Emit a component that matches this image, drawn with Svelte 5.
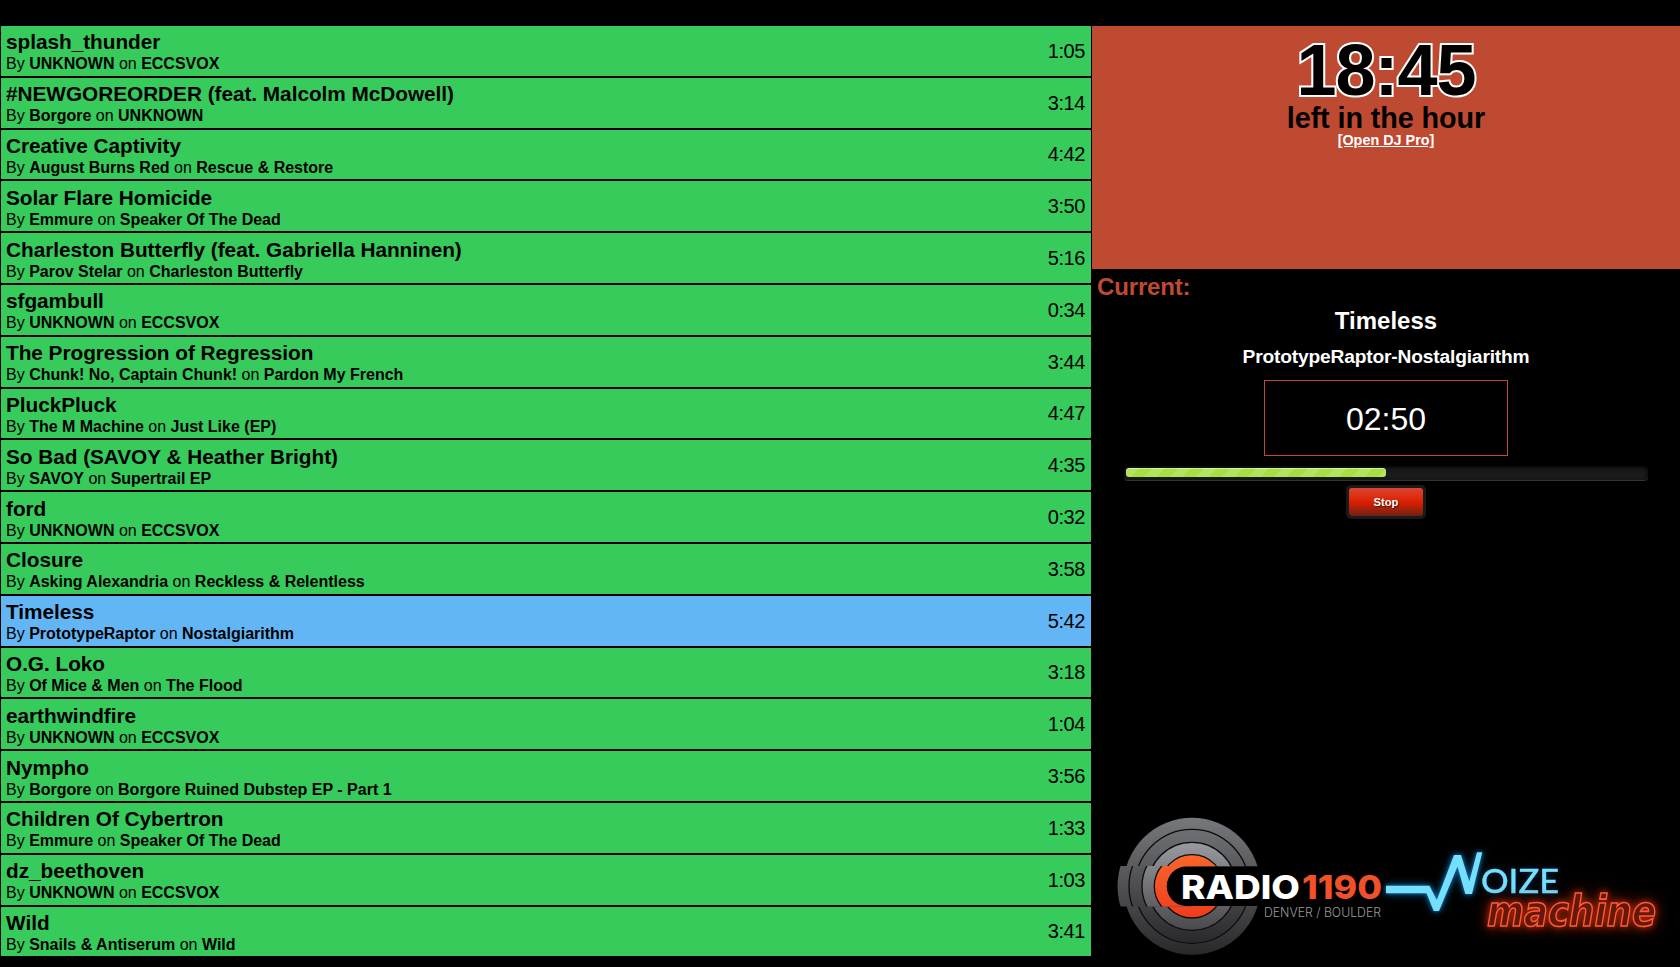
<script>
  const tracks = [
    ['splash_thunder', 'UNKNOWN', 'ECCSVOX', '1:05'],
    ['#NEWGOREORDER (feat. Malcolm McDowell)', 'Borgore', 'UNKNOWN', '3:14'],
    ['Creative Captivity', 'August Burns Red', 'Rescue & Restore', '4:42'],
    ['Solar Flare Homicide', 'Emmure', 'Speaker Of The Dead', '3:50'],
    ['Charleston Butterfly (feat. Gabriella Hanninen)', 'Parov Stelar', 'Charleston Butterfly', '5:16'],
    ['sfgambull', 'UNKNOWN', 'ECCSVOX', '0:34'],
    ['The Progression of Regression', 'Chunk! No, Captain Chunk!', 'Pardon My French', '3:44'],
    ['PluckPluck', 'The M Machine', 'Just Like (EP)', '4:47'],
    ['So Bad (SAVOY & Heather Bright)', 'SAVOY', 'Supertrail EP', '4:35'],
    ['ford', 'UNKNOWN', 'ECCSVOX', '0:32'],
    ['Closure', 'Asking Alexandria', 'Reckless & Relentless', '3:58'],
    ['Timeless', 'PrototypeRaptor', 'Nostalgiarithm', '5:42'],
    ['O.G. Loko', 'Of Mice & Men', 'The Flood', '3:18'],
    ['earthwindfire', 'UNKNOWN', 'ECCSVOX', '1:04'],
    ['Nympho', 'Borgore', 'Borgore Ruined Dubstep EP - Part 1', '3:56'],
    ['Children Of Cybertron', 'Emmure', 'Speaker Of The Dead', '1:33'],
    ['dz_beethoven', 'UNKNOWN', 'ECCSVOX', '1:03'],
    ['Wild', 'Snails & Antiserum', 'Wild', '3:41']
  ];
  const current = 11;
  const progress = 50;
</script>

<div class="page">
  <main class="playlist">
    {#each tracks as [title, artist, album, time], i}
      <div class="track" class:playing={i === current}>
        <div class="info">
          <div class="title">{title}</div>
          <div class="by">By <b>{artist}</b> on <b>{album}</b></div>
        </div>
        <div class="time">{time}</div>
      </div>
    {/each}
  </main>

  <aside class="side">
    <section class="hour">
      <div class="clock">18:45</div>
      <div class="left">left in the hour</div>
      <a href="#pro">[Open DJ Pro]</a>
    </section>

    <section class="now">
      <h2>Current:</h2>
      <div class="song">Timeless</div>
      <div class="artist">PrototypeRaptor-Nostalgiarithm</div>
      <div class="remaining">02:50</div>
      <div class="bar"><div class="fill" style="width: {progress}%"></div></div>
      <button>Stop</button>
    </section>

    <svg class="logos" viewBox="1092 800 588 167" width="588" height="167">
      <defs>
        <linearGradient id="g1" gradientUnits="userSpaceOnUse" x1="0" y1="818" x2="0" y2="955">
          <stop offset="0" stop-color="#77787c" /><stop offset="1" stop-color="#29292b" />
        </linearGradient>
        <linearGradient id="g2" gradientUnits="userSpaceOnUse" x1="0" y1="829" x2="0" y2="943">
          <stop offset="0" stop-color="#707175" /><stop offset="1" stop-color="#29292b" />
        </linearGradient>
        <linearGradient id="g3" gradientUnits="userSpaceOnUse" x1="0" y1="842" x2="0" y2="930">
          <stop offset="0" stop-color="#9a9ba1" /><stop offset="1" stop-color="#4a4a4d" />
        </linearGradient>
        <linearGradient id="g4" gradientUnits="userSpaceOnUse" x1="0" y1="855" x2="0" y2="918">
          <stop offset="0" stop-color="#f8672b" /><stop offset="1" stop-color="#f03b1c" />
        </linearGradient>
        <clipPath id="outer"><path d="M1092 800h300v66.5h-300zM1092 906h300v61h-300z" /></clipPath>
        <!-- the band is clipped before the six-pixel shift, so its right edge sits at the disc's centre -->
        <clipPath id="band"><rect x="1092" y="866" width="100" height="40.5" /></clipPath>
        <g id="rings" stroke="#0c0c0d" stroke-width="1.3">
          <circle cx="1192" cy="886.3" r="68.5" fill="url(#g1)" stroke="none" />
          <circle cx="1192" cy="886.3" r="57" fill="url(#g2)" />
          <circle cx="1192" cy="886.3" r="44" fill="url(#g3)" />
          <circle cx="1192" cy="886.3" r="31.7" fill="url(#g4)" />
        </g>
        <filter id="glow" x="-20%" y="-50%" width="140%" height="200%">
          <feGaussianBlur stdDeviation="5" />
        </filter>
        <filter id="halo" x="-20%" y="-50%" width="140%" height="200%">
          <feGaussianBlur stdDeviation="2" />
        </filter>
        <path id="pulse" d="M1386 885.7H1429.5L1436.8 900L1454 855H1461L1469.3 881.5L1477 852.3H1482.3L1472 894H1465.3L1457.5 866.5L1439 911H1433.7L1426.5 893.3H1386Z" />
      </defs>

      <use href="#rings" clip-path="url(#outer)" />
      <g clip-path="url(#band)"><use href="#rings" x="-6" /></g>
      <rect x="1166.7" y="866.5" width="130" height="39.5" rx="19.7" fill="#000" />
      <g class="radio">
        <text x="1181" y="898.5" fill="#fff" textLength="119" lengthAdjust="spacingAndGlyphs">RADIO</text>
        <text x="1302" y="898.5" fill="#f0512a" textLength="80" lengthAdjust="spacingAndGlyphs">1190</text>
      </g>
      <text class="city" x="1264" y="916.7" textLength="117" lengthAdjust="spacingAndGlyphs">DENVER / BOULDER</text>

      <use href="#pulse" fill="#1686d8" opacity=".6" filter="url(#glow)" />
      <use href="#pulse" fill="#1c78b8" filter="url(#halo)" />
      <use href="#pulse" fill="#73e0ff" />
      <text class="noize" x="1481" y="892.7" textLength="78" lengthAdjust="spacingAndGlyphs">OIZE</text>

      <text class="machine" x="1487" y="925.5" textLength="169" lengthAdjust="spacingAndGlyphs">machine</text>
    </svg>
  </aside>
</div>

<style>
  :global(body) {
    background: #000;
  }
  .page {
    box-sizing: border-box;
    width: 1680px;
    height: 967px;
    padding-top: 25px;
    display: flex;
    overflow: hidden;
    background: #000;
    color: #000;
    font-family: 'Liberation Sans', Arial, sans-serif;
  }
  .playlist {
    width: 1092px;
    height: 932.4px;
    display: flex;
    flex-direction: column;
  }
  .track {
    box-sizing: border-box;
    flex: 1 1 0;
    min-height: 0;
    display: flex;
    justify-content: space-between;
    align-items: center;
    border: 1px solid #000;
    padding: 0 6px 0 5px;
    background: #36cb5b;
  }
  .playing {
    background: #62b6f5;
  }
  .info {
    padding-top: 1px;
  }
  .title {
    font-size: 20.8px;
    font-weight: bold;
    line-height: 24px;
    letter-spacing: -0.04px;
    white-space: nowrap;
  }
  .by {
    padding-top: 1px;
    margin-bottom: -1px;
    font-size: 16px;
    line-height: 18px;
    white-space: nowrap;
  }
  .time {
    font-size: 20px;
    line-height: 24px;
    letter-spacing: -0.4px;
  }
  .side {
    width: 588px;
    display: flex;
    flex-direction: column;
  }
  .hour {
    box-sizing: border-box;
    height: 243px;
    margin-top: 1px;
    padding-top: 4px;
    display: flex;
    flex-direction: column;
    align-items: center;
    background: #bf4a32;
    font-weight: bold;
  }
  .clock {
    font-size: 72px;
    line-height: 80px;
    letter-spacing: -1px;
    -webkit-text-stroke: 4px #fff;
    paint-order: stroke fill;
  }
  .left {
    margin-top: -4px;
    font-size: 28.8px;
    line-height: 24px;
    letter-spacing: -0.1px;
  }
  .hour a {
    color: #fff;
    font-size: 14.4px;
    line-height: 17px;
    margin-top: 2px;
  }
  .now {
    flex: 1;
    display: flex;
    flex-direction: column;
    align-items: center;
    color: #fff;
  }
  h2 {
    align-self: flex-start;
    margin: 4px 0 0 5px;
    font-size: 24px;
    line-height: 28px;
    letter-spacing: -0.15px;
    color: #bf4a32;
  }
  .song {
    margin-top: 6px;
    font-size: 24px;
    line-height: 28px;
    font-weight: bold;
  }
  .artist {
    margin-top: 11px;
    font-size: 19.2px;
    line-height: 22px;
    font-weight: bold;
    letter-spacing: -0.17px;
  }
  .remaining {
    box-sizing: border-box;
    width: 244px;
    height: 76px;
    margin-top: 12px;
    border: 1px solid #bf4a32;
    font-size: 32px;
    line-height: 76px;
    text-align: center;
  }
  .bar {
    box-sizing: border-box;
    width: 524px;
    height: 15px;
    margin-top: 10px;
    padding: 2px 2px 0;
    border-radius: 4px;
    background: #1a1a1a;
    box-shadow: inset 0 1px 4px #000, inset 0 -1px 0 #444;
  }
  .fill {
    height: 9px;
    border-radius: 3px;
    background-color: #a5df41;
    background-image: linear-gradient(135deg, rgba(255, 255, 255, 0.15) 25%, transparent 25%, transparent 50%, rgba(255, 255, 255, 0.15) 50%, rgba(255, 255, 255, 0.15) 75%, transparent 75%);
    background-size: 26px 26px;
    box-shadow: inset 0 1px 0 rgba(255, 255, 255, 0.5);
  }
  button {
    width: 80px;
    height: 34px;
    margin-top: 4px;
    padding: 0;
    border: 3px solid #1a1a1a;
    border-radius: 5px;
    background: linear-gradient(#dc4630, #dc2000 50%, #6c2114) padding-box;
    color: #fff;
    font: bold 11.2px 'Liberation Sans', Arial, sans-serif;
    text-shadow: 1px 1px 1px rgba(0, 0, 0, 0.6);
  }
  .logos {
    flex: none;
    display: block;
  }
  .radio text {
    font: 800 33px Inter, sans-serif;
  }
  .city {
    font: 300 12.8px Inter, sans-serif;
    fill: #999;
  }
  .noize {
    font: 500 33px Lato, sans-serif;
    fill: #73e0ff;
    stroke: #73e0ff;
    stroke-width: 0.3px;
    filter: drop-shadow(0 0 3px rgba(20, 110, 190, 0.4));
  }
  .machine {
    font: italic bold 42px 'DejaVu Sans', sans-serif;
    fill: #64180b;
    stroke: #ff5a36;
    stroke-width: 1.6px;
    filter: drop-shadow(0 0 3px #a82408) drop-shadow(0 0 7px #7a1a06);
  }
</style>
